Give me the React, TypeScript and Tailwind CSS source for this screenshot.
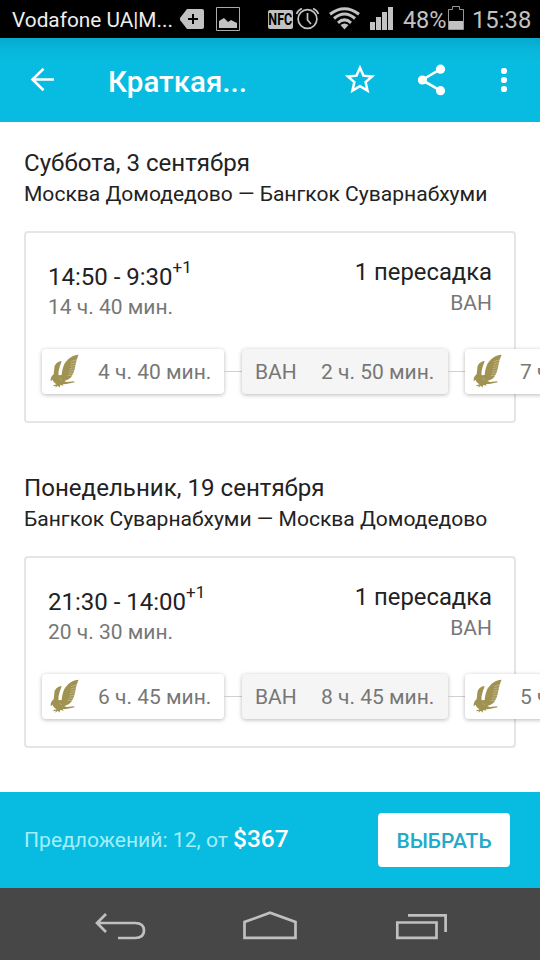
import React from 'react';

function Falcon() {
  return (
    <svg className="h-[36px] w-[32px] shrink-0 -translate-y-px" viewBox="0 0 96 108" fill="#a09352">
      <path d="M89 5C72 5 55 17 46 33C40 46 39 58 38 66L29 67C27 57 31 44 38 24C25 26 17 33 16 45L14 64C8 69 4 74 5 85L11 80C12 87 18 90 23 94L13 97V100L21 98L18 104L27 98L31 104L34 96L44 98L41 94L52 93L77 88L75 85L53 87L46 84C58 81 66 76 70 66C80 50 78 27 89 5Z" />
      <path d="M66 26L84 20M65 33L81 29M64 40L79 37M62 47L77 44M61 54L76 52M59 61L73 60M56 68L69 67" stroke="#fff" strokeWidth="1.8" opacity=".5" />
      <path d="M31 76L39 81" stroke="#fff" strokeWidth="1.3" opacity=".45" />
    </svg>
  );
}

function StatusBar() {
  return (
    <header className="flex h-[38px] shrink-0 items-center bg-black text-[#c2c2c2]">
      <span className="ml-3 w-[168px] whitespace-nowrap pt-px text-[20.8px] leading-[38px] text-[#eeeeee]">Vodafone UA|M...</span>
      <svg className="h-[38px] w-[64px] shrink-0" viewBox="0 0 64 38">
        <path d="M7 9H22Q24 9 24 11V27Q24 29 22 29H7L0 20V18Z" fill="#c2c2c2" />
        <path d="M13 19H18M13 19H8M13 14V24" stroke="#000" strokeWidth="2" />
        <path d="M36.5 7.5H59.5V30.5H36.5Z" fill="none" stroke="#aaa" />
        <path d="M39 28V21L44 18L48 22L51 20L57 23V28Z" fill="#c2c2c2" />
      </svg>
      <span className="ml-[24px] flex h-[19px] w-[25px] items-center justify-center rounded-[2px] bg-[#c2c2c2] text-black">
        <span className="scale-x-[.78] pt-px text-[16px] font-bold leading-none">NFC</span>
      </span>
      <svg className="ml-[2px] h-[38px] w-[25px] shrink-0" viewBox="0 0 25 38" fill="none" stroke="#c2c2c2">
        <circle cx="12.5" cy="19" r="9.4" strokeWidth="1.7" />
        <path d="M12.5 13V20L16 24M1.5 14Q3 10 7 8.5M23.5 14Q22 10 18 8.5" strokeWidth="1.7" />
      </svg>
      <svg className="ml-[9px] h-[38px] w-[31px] shrink-0" viewBox="0 0 31 38" fill="none" stroke="#c2c2c2" strokeWidth="3">
        <path d="M1 14.2Q15.5 3.3 30 14.2M5 18.5Q15.5 9.5 26 18.5M9 22.8Q15.5 17 22 22.8" />
        <path d="M11.5 25Q15.5 22 19.5 25L15.5 29.5Z" fill="#c2c2c2" stroke="none" />
      </svg>
      <svg className="ml-[10px] h-[38px] w-[24px] shrink-0" viewBox="0 0 24 38" fill="#c2c2c2">
        <path d="M0 22H5V30H0ZM6 17H11V30H6ZM12 12H17V30H12ZM18 7H23V30H18Z" />
      </svg>
      <span className="ml-[9px] w-[45px] whitespace-nowrap pt-[2px] text-[23.5px] leading-[38px] tracking-[-0.1px]">48%</span>
      <svg className="h-[38px] w-[16px] shrink-0" viewBox="0 0 16 38">
        <path d="M.5 9.5H4.5V6.5H11.5V9.5H15.5V29.5H.5Z" fill="none" stroke="#999" />
        <path d="M1 21H15V29H1Z" fill="#c2c2c2" />
      </svg>
      <span className="ml-[8px] whitespace-nowrap pt-[2px] text-[23.8px] leading-[38px]">15:38</span>
    </header>
  );
}

function AppBar() {
  return (
    <div className="flex h-[84px] shrink-0 items-center bg-[#08bbe0] bg-[linear-gradient(#06a9cc_0px,#08b7dc_12px,#08bbe0_24px)] text-white">
      <svg className="ml-[30px] h-6 w-6 shrink-0" viewBox="0 0 24 24" fill="none" stroke="currentColor" strokeWidth="2.6">
        <path d="M24 11.5H2M13.5 .8L2.5 11.5L13.5 22.2" />
      </svg>
      <h1 className="ml-[54px] w-[236px] pt-[3px] text-[29.5px] font-medium leading-[40px]">Краткая...</h1>
      <svg className="h-[30px] w-[32px] shrink-0" viewBox="0 0 32 30" fill="none" stroke="currentColor" strokeWidth="2.3">
        <path d="M16 4.2L19.2 11.5L27.2 12.3L21.2 17.5L23 25.4L16 21.2L9 25.4L10.8 17.5L4.8 12.3L12.8 11.5Z" transform="translate(-1.3 -1.8) scale(1.08)" />
      </svg>
      <svg className="ml-[41px] h-[32px] w-[30px] shrink-0" viewBox="0 0 30 32" fill="currentColor">
        <path d="M5 16L23.5 5.2M5 16L23.5 26.7" stroke="currentColor" strokeWidth="2.6" />
        <circle cx="5.4" cy="16" r="4.6" /><circle cx="23.5" cy="5.2" r="4.6" /><circle cx="23.5" cy="26.7" r="4.6" />
      </svg>
      <svg className="ml-[53px] h-6 w-2 shrink-0" viewBox="0 0 8 24" fill="currentColor">
        <circle cx="4" cy="2.9" r="3.1" /><circle cx="4" cy="12" r="3.1" /><circle cx="4" cy="21.1" r="3.1" />
      </svg>
    </div>
  );
}

type Leg = {
  day: string; route: string; time: string; total: string;
  first: string; stop: string; last: string;
};

const chip = 'flex h-[45px] shrink-0 items-center rounded-[4px] text-[21px] text-[#777] whitespace-nowrap shadow-[0_1px_4px_rgba(0,0,0,0.28)]';

function Journey({ leg }: { leg: Leg }) {
  return (
    <section className="flex h-[325px] w-full shrink-0 flex-col">
      <h2 className="ml-6 h-[31px] whitespace-nowrap text-[24.1px] leading-[31px] text-[#222]">{leg.day}</h2>
      <p className="ml-6 h-[29px] whitespace-nowrap text-[21.05px] leading-[29px] text-[#222]">{leg.route}</p>
      <div className="ml-6 mt-[23px] h-[192px] w-[492px] rounded-[4px] border-2 border-[#e5e5e5] pt-[23px]">
        <div className="flex justify-between px-[22px]">
          <div className="pt-[5px]">
            <div className="flex h-[32px] whitespace-nowrap text-[24px] leading-[32px] text-[#222]">
              {leg.time}<span className="text-[17px] leading-[12px]">+1</span>
            </div>
            <div className="text-[21px] leading-[29px] text-[#777]">{leg.total}</div>
          </div>
          <div className="text-right">
            <div className="text-[23.8px] leading-[33px] text-[#222]">1 пересадка</div>
            <div className="text-[21px] leading-[28px] text-[#777]">ВАН</div>
          </div>
        </div>
        <div className="ml-[16px] mt-[27px] flex w-[600px] items-center">
          <div className={`${chip} w-[182px] bg-white pl-[7px]`}><Falcon /><span className="ml-[17px] pt-[3px]">{leg.first}</span></div>
          <i className="h-px w-[18px] bg-[#d0d0d0]" />
          <div className={`${chip} w-[206px] bg-[#f5f5f5] pl-[13px]`}><span className="w-[66px] pt-[3px]">ВАН</span><span className="pt-[3px]">{leg.stop}</span></div>
          <i className="h-px w-[18px] bg-[#d0d0d0]" />
          <div className={`${chip} -ml-px w-[170px] bg-white pl-[7px]`}><Falcon /><span className="ml-[16px] pt-[3px]">{leg.last}</span></div>
        </div>
      </div>
    </section>
  );
}

const legs: Leg[] = [
  { day: 'Суббота, 3 сентября', route: 'Москва Домодедово — Бангкок Суварнабхуми', time: '14:50 - 9:30', total: '14 ч. 40 мин.', first: '4 ч. 40 мин.', stop: '2 ч. 50 мин.', last: '7 ч.' },
  { day: 'Понедельник, 19 сентября', route: 'Бангкок Суварнабхуми — Москва Домодедово', time: '21:30 - 14:00', total: '20 ч. 30 мин.', first: '6 ч. 45 мин.', stop: '8 ч. 45 мин.', last: '5 ч.' },
];

function NavBar() {
  return (
    <nav className="flex h-[72px] shrink-0 items-center bg-[#474747] pl-[94px] pt-[4px]">
      <svg className="h-[30px] w-[54px]" viewBox="0 0 54 30" fill="none" stroke="#c0c0c0" strokeWidth="2.7">
        <path d="M12 3L3 12L12 21M4 12H41Q50 12 50 19.5Q50 27 41 27H24" />
      </svg>
      <svg className="ml-[94px] h-[30px] w-[56px]" viewBox="0 0 56 30" fill="none" stroke="#c0c0c0" strokeWidth="2.7">
        <path d="M2.5 26.8V11L28 1.8L53.5 11V26.8Z" />
      </svg>
      <svg className="ml-[97px] h-[30px] w-[54px]" viewBox="0 0 54 30" fill="none" stroke="#c0c0c0" strokeWidth="2.7">
        <path d="M2.3 11.5H41.5V26.8H2.3ZM13 4.3H50.6V21" />
      </svg>
    </nav>
  );
}

export default function App() {
  return (
    <div className="flex h-[960px] w-[540px] flex-col overflow-hidden bg-white font-[Roboto,sans-serif]">
      <StatusBar />
      <AppBar />
      <main className="flex h-[670px] shrink-0 flex-col overflow-hidden pt-[26px]">
        {legs.map((leg) => <Journey key={leg.day} leg={leg} />)}
      </main>
      <footer className="flex h-24 shrink-0 items-center bg-[#08bbe0] pl-6 pr-[30px]">
        <div className="-mt-[2px] flex flex-1 items-baseline whitespace-nowrap text-[21.1px] text-[#a4eefa]">
          <span className="w-[209px]">Предложений: 12, от</span>
          <span className="text-[24.5px] font-medium text-white">$367</span>
        </div>
        <button className="h-[54px] w-[132px] rounded-[4px] bg-white pt-[3px] text-[21px] font-medium text-[#22aac8]">ВЫБРАТЬ</button>
      </footer>
      <NavBar />
    </div>
  );
}
